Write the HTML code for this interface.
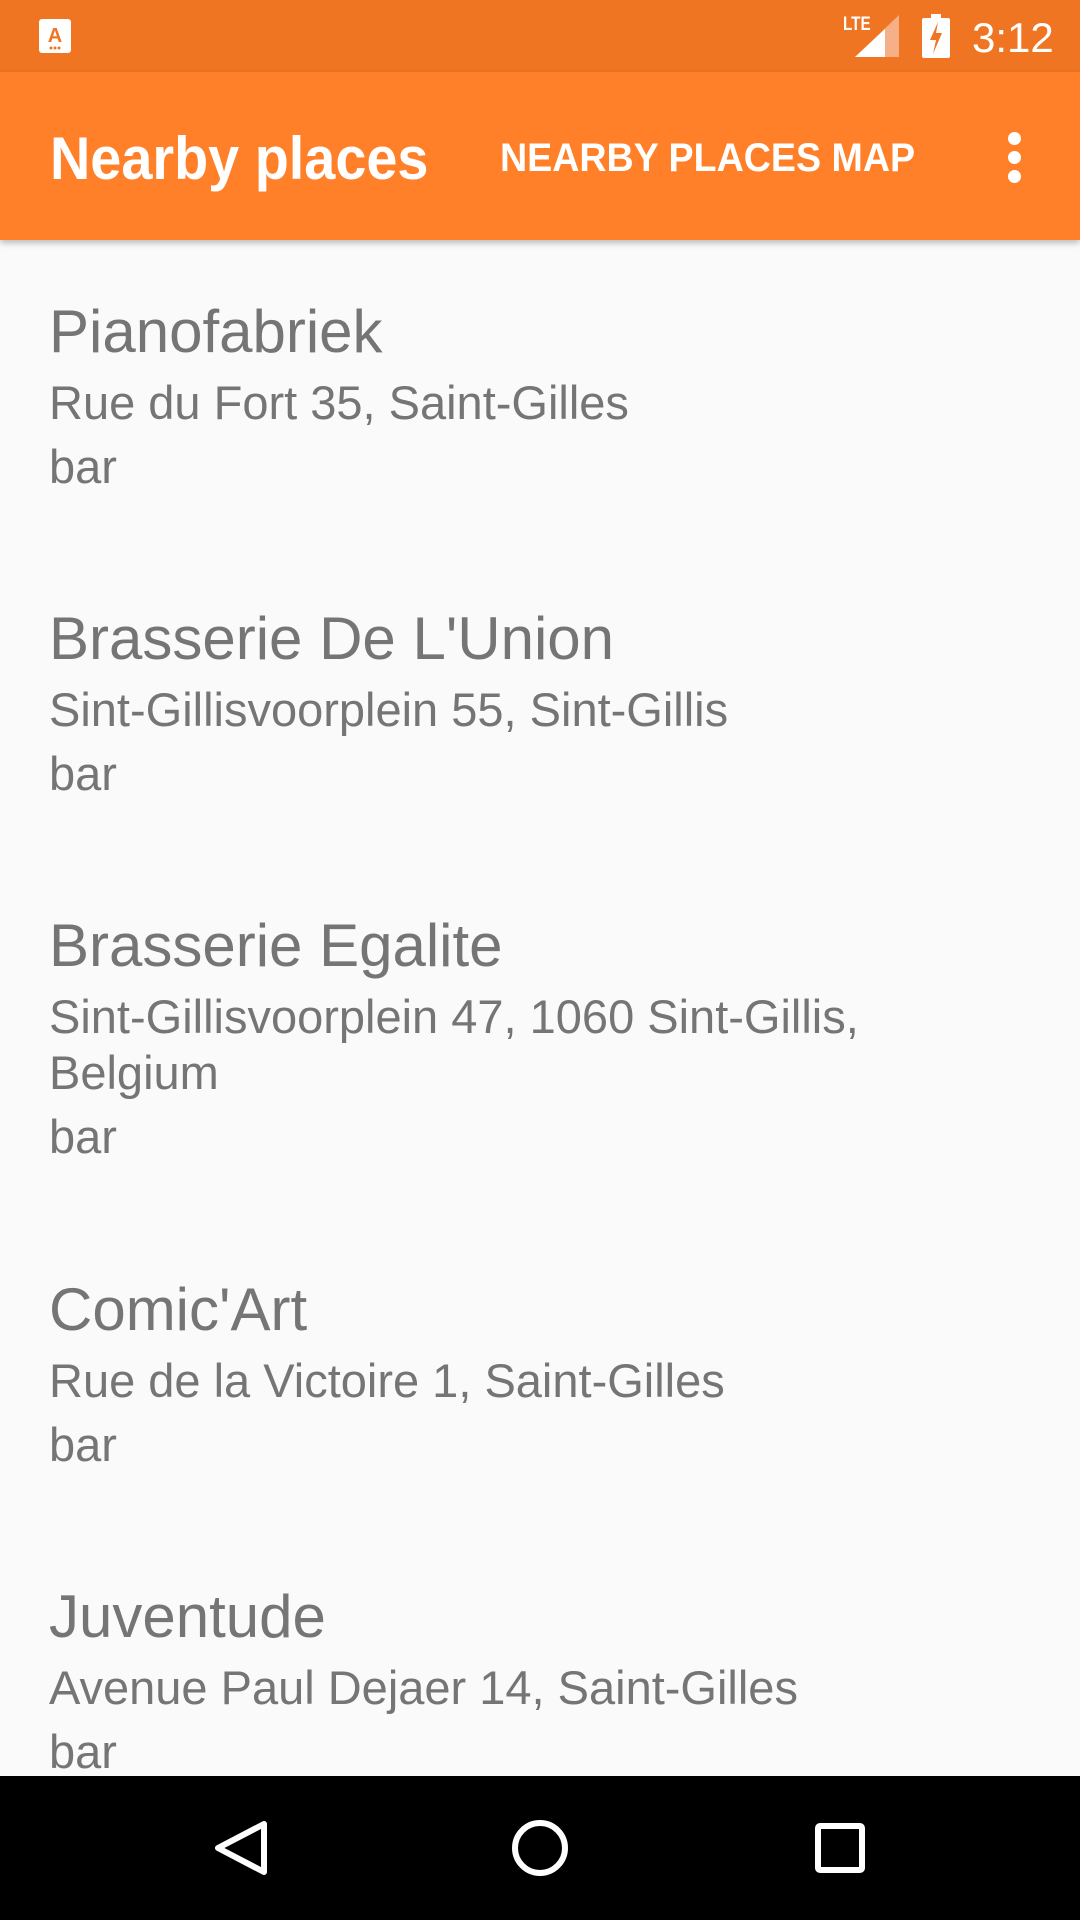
<!DOCTYPE html>
<html><head><meta charset="utf-8"><style>
*{margin:0;padding:0;box-sizing:border-box}
body{width:1080px;height:1920px;background:#fafafa;font-family:"Liberation Sans",Roboto,sans-serif;position:relative;overflow:hidden}
.status{position:absolute;left:0;top:0;width:1080px;height:72px;background:#f07522}
.appbar{position:absolute;left:0;top:72px;width:1080px;height:168px;background:#ff8029;box-shadow:0 3px 6px rgba(0,0,0,0.25);z-index:2}
.t{position:absolute;white-space:nowrap;transform-origin:0 0}
.title{left:50px;top:52px;color:#fff;font-size:60px;font-weight:bold;transform:scaleX(0.93)}
.act{left:500px;top:64px;color:#fff;font-size:40px;font-weight:bold;transform:scaleX(0.94)}
.dot{position:absolute;left:1008px;width:13px;height:13px;border-radius:50%;background:#fff}
.item{position:absolute;left:49px;color:#757575}
.n{font-size:60px;line-height:68px}
.a{font-size:47px;line-height:58px}
.nav{position:absolute;left:0;top:1776px;width:1080px;height:144px;background:#000}
</style></head><body>
<div class="status">
<svg style="position:absolute;left:38px;top:18px" width="34" height="36" viewBox="0 0 34 36"><rect x="1" y="1" width="32" height="34" rx="3" fill="#fff"/><text x="17" y="24" font-size="20" font-weight="bold" fill="#f07522" text-anchor="middle" font-family="Liberation Sans">A</text><circle cx="13" cy="30" r="1.5" fill="#f07522"/><circle cx="17" cy="30" r="1.5" fill="#f07522"/><circle cx="21" cy="30" r="1.5" fill="#f07522"/></svg>
<div class="t" style="left:843px;top:14px;color:#fff;font-size:19px;font-weight:bold;transform:scaleX(0.8)">LTE</div>
<svg style="position:absolute;left:855px;top:15px" width="45" height="42" viewBox="0 0 45 42"><polygon points="44,0 44,42 0,42" fill="#f6b088"/><polygon points="30,14 30,42 0,42" fill="#fff"/></svg>
<svg style="position:absolute;left:922px;top:14px" width="28" height="44" viewBox="0 0 28 44"><rect x="9" y="0" width="10" height="4" fill="#fff"/><rect x="0" y="4" width="28" height="40" rx="2" fill="#fff"/><polygon points="16,8 8,26 14,26 11,40 20,19 14,19" fill="#f07522"/></svg>
<div class="t" style="left:972px;top:14px;color:#fff;font-size:42px">3:12</div>
</div>
<div class="appbar">
<div class="t title">Nearby places</div>
<div class="t act">NEARBY PLACES MAP</div>
<div class="dot" style="top:60px"></div><div class="dot" style="top:79px"></div><div class="dot" style="top:98px"></div>
</div>

<div class="item" style="top:298px"><div class="n">Pianofabriek</div><div class="a" style="margin-top:8px">Rue du Fort 35, Saint-Gilles</div><div class="a" style="margin-top:6px">bar</div></div>
<div class="item" style="top:605px"><div class="n">Brasserie De L'Union</div><div class="a" style="margin-top:8px">Sint-Gillisvoorplein 55, Sint-Gillis</div><div class="a" style="margin-top:6px">bar</div></div>
<div class="item" style="top:912px"><div class="n">Brasserie Egalite</div><div class="a" style="margin-top:8px">Sint-Gillisvoorplein 47, 1060 Sint-Gillis,</div><div class="a" style="margin-top:-2px">Belgium</div><div class="a" style="margin-top:6px">bar</div></div>
<div class="item" style="top:1276px"><div class="n">Comic'Art</div><div class="a" style="margin-top:8px">Rue de la Victoire 1, Saint-Gilles</div><div class="a" style="margin-top:6px">bar</div></div>
<div class="item" style="top:1583px"><div class="n">Juventude</div><div class="a" style="margin-top:8px">Avenue Paul Dejaer 14, Saint-Gilles</div><div class="a" style="margin-top:6px">bar</div></div>

<div class="nav">
<svg width="1080" height="144" viewBox="0 0 1080 144" style="position:absolute;left:0;top:0">
<polygon points="264,48 264,96 218,72" fill="none" stroke="#fff" stroke-width="6" stroke-linejoin="round"/>
<circle cx="540" cy="72" r="25" fill="none" stroke="#fff" stroke-width="6"/>
<rect x="818" y="50" width="44" height="44" rx="2" fill="none" stroke="#fff" stroke-width="6"/>
</svg>
</div>
</body></html>
